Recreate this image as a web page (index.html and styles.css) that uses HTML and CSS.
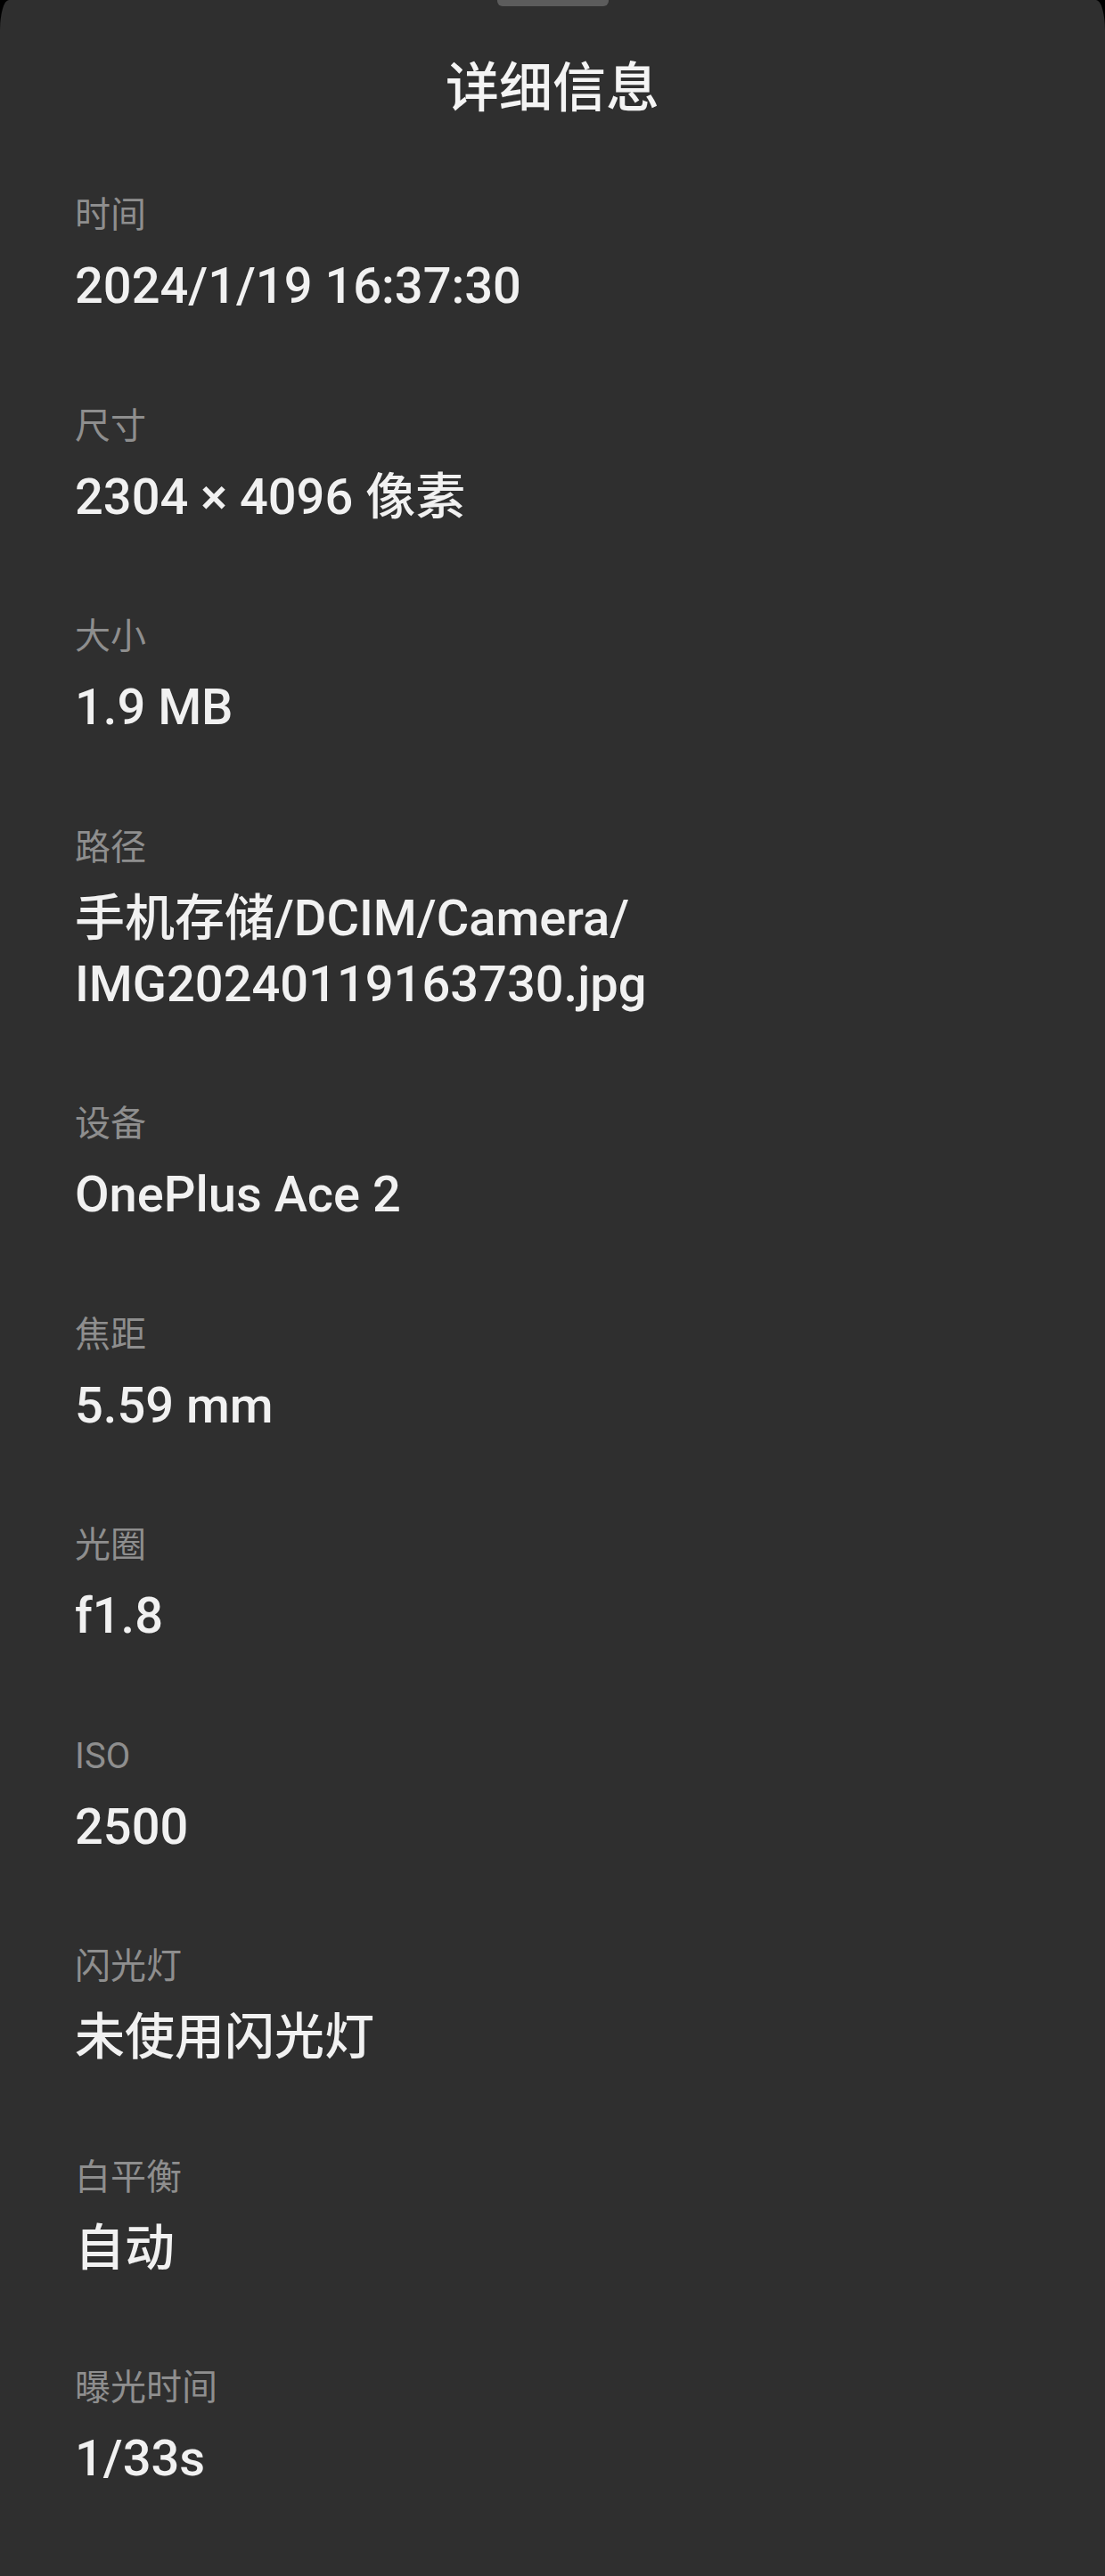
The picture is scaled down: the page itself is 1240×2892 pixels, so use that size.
FILE: index.html
```html
<!DOCTYPE html>
<html lang="zh-CN">
<head>
<meta charset="utf-8">
<title>详细信息</title>
<link rel="stylesheet" href="styles.css">
</head>
<body>
<div class="sheet">
  <div class="handle"></div>
  <h1 class="title">详细信息</h1>
  <div class="list">
    <div class="item"><div class="label">时间</div><div class="value">2024/1/19 16:37:30</div></div>
    <div class="item"><div class="label">尺寸</div><div class="value">2304 × 4096 像素</div></div>
    <div class="item"><div class="label">大小</div><div class="value">1.9 MB</div></div>
    <div class="item"><div class="label">路径</div><div class="value">手机存储/DCIM/Camera/<br>IMG20240119163730.jpg</div></div>
    <div class="item"><div class="label">设备</div><div class="value">OnePlus Ace 2</div></div>
    <div class="item"><div class="label">焦距</div><div class="value">5.59 mm</div></div>
    <div class="item"><div class="label">光圈</div><div class="value">f1.8</div></div>
    <div class="item"><div class="label">ISO</div><div class="value">2500</div></div>
    <div class="item"><div class="label">闪光灯</div><div class="value">未使用闪光灯</div></div>
    <div class="item"><div class="label">白平衡</div><div class="value">自动</div></div>
    <div class="item"><div class="label">曝光时间</div><div class="value">1/33s</div></div>
  </div>
</div>
</body>
</html>
```

FILE: styles.css
```css
html, body {
  margin: 0;
  padding: 0;
  background: #000;
}
body {
  font-family: "Roboto", "Noto Sans CJK SC", sans-serif;
}
.sheet {
  width: 1240px;
  min-height: 2892px;
  background: #2f2f2f;
  border-radius: 10px 10px 0 0 / 34px 34px 0 0;
  box-sizing: border-box;
  overflow: hidden;
}
.handle {
  width: 125px;
  height: 7px;
  margin: 0 auto;
  background: #5c5c5c;
  border-radius: 0 0 6px 6px;
}
.title {
  margin: 53px 0 0;
  font-size: 60px;
  line-height: 80px;
  font-weight: 500;
  text-align: center;
  color: #f4f4f4;
}
.list {
  margin-top: 76px;
  padding: 0 84px;
}
.item {
  margin-bottom: 94.5px;
}
.label {
  font-size: 40px;
  line-height: 52px;
  color: #8e8e8e;
}
.value {
  margin-top: 16px;
  font-size: 56px;
  line-height: 74px;
  color: #f1f1f1;
  font-weight: 500;
}
```
